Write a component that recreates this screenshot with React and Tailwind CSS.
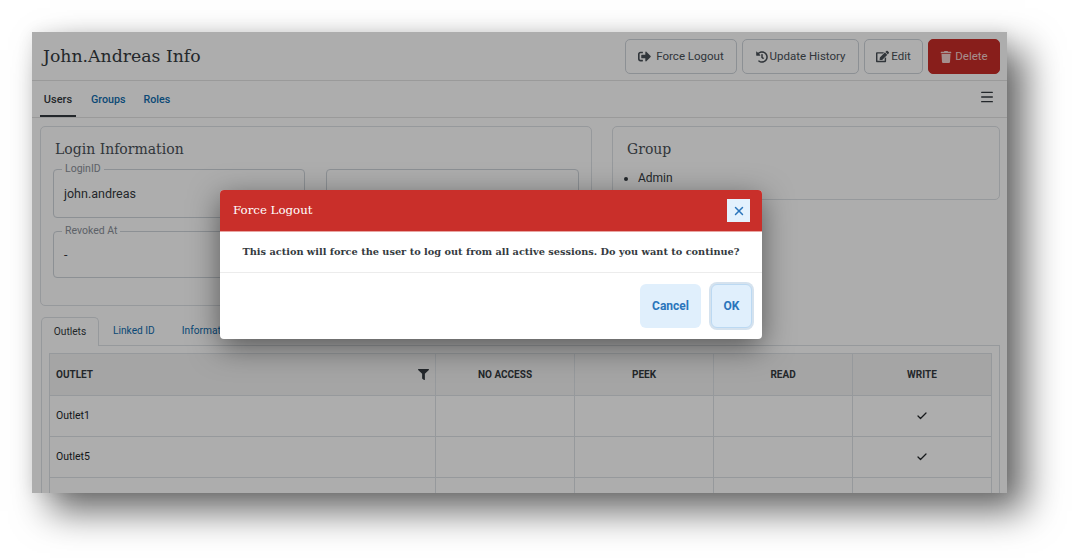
import React from "react";
import { FaSignOutAlt, FaHistory, FaEdit, FaTrash, FaFilter } from "react-icons/fa";
import { Menu, X, Check } from "lucide-react";

const slab = "font-['DejaVu_Serif',serif]";

function ActionButton({ icon, label, className = "" }) {
  return (
    <button className={`flex h-[35px] items-center justify-center rounded-[5px] border pt-[1px] text-[11.5px] ${className}`}>
      {icon}
      {label}
    </button>
  );
}

function Field({ label, value, className = "" }) {
  return (
    <div className={`relative flex items-center rounded-[4px] border border-[#ced4da] pl-[10px] pt-[1px] text-[12.5px] text-[#343a40] ${className}`}>
      {label && (
        <span className="absolute left-[8px] top-[-7px] bg-white px-[3px] text-[10.5px] leading-[12px] text-[#8a9099]">{label}</span>
      )}
      {value}
    </div>
  );
}

function Row({ name }) {
  return (
    <div className="grid h-[41px] grid-cols-[386px_139px_139px_139px_138px] border-b border-[#dee2e6] text-[10.5px] text-[#212529]">
      <div className="flex items-center border-r border-[#dee2e6] pl-[6px]">{name}</div>
      <div className="border-r border-[#dee2e6]" />
      <div className="border-r border-[#dee2e6]" />
      <div className="border-r border-[#dee2e6]" />
      <div className="flex items-center justify-center pb-[1px]">
        {name && <Check size={12} strokeWidth={2.5} />}
      </div>
    </div>
  );
}

export default function App() {
  return (
    <div className="h-[558px] w-[1072px] overflow-hidden bg-white pl-[32px] pt-[32px] font-['Roboto',sans-serif]">
      <div className="relative h-[461px] w-[975px] overflow-hidden bg-white shadow-[18px_18px_35px_rgba(0,0,0,0.6),0_0_15px_rgba(0,0,0,0.08)]">
        <header className="flex h-[49px] items-center justify-between border-b border-[#e3e3e3] pl-[11px] pr-[7px]">
          <h1 className={`${slab} pt-[2px] text-[17.3px] text-[#343a40]`}>John.Andreas Info</h1>
          <div className="flex gap-[5px]">
            <ActionButton className="w-[112px] gap-[5px] border-[#ced4da] text-[#495057]" icon={<FaSignOutAlt size={13} />} label="Force Logout" />
            <ActionButton className="w-[117px] gap-[2px] border-[#ced4da] text-[#495057]" icon={<FaHistory size={12} />} label="Update History" />
            <ActionButton className="w-[59px] gap-[2px] border-[#ced4da] text-[#495057]" icon={<FaEdit size={13} />} label="Edit" />
            <ActionButton className="w-[72px] gap-[3px] border-[#c92d28] bg-[#c92d28] text-[#f4d3d1]" icon={<FaTrash size={12} />} label="Delete" />
          </div>
        </header>

        <nav className="flex h-[37px] items-stretch justify-between border-b border-[#e3e3e3] pl-[8px] pr-[12px] text-[10.7px] font-medium">
          <div className="flex">
            <span className="flex w-[36px] items-center justify-center border-b-2 border-[#343a40] pt-[5px] text-[11px] text-[#343a40]">Users</span>
            <span className="ml-[15px] flex items-center pt-[2px] text-[#0f6cae]">Groups</span>
            <span className="ml-[18px] flex items-center pt-[2px] text-[#0f6cae]">Roles</span>
          </div>
          <div className="flex items-center pb-[4px] text-[#343a40]"><Menu size={16} /></div>
        </nav>

        <div className="flex items-start pl-[8px] pr-[7px] pt-[8px]">
          <section className="h-[180px] w-[552px] rounded-[5px] border border-[#dee2e6] pl-[12px] pr-[12px] pt-[12px]">
            <h2 className={`${slab} pl-[2px] text-[14px] leading-[20px] text-[#495057]`}>Login Information</h2>
            <div className="mt-[10px] grid grid-cols-[252px_253px] grid-rows-[49px_47px] gap-x-[21px] gap-y-[13px]">
              <Field label="LoginID" value="john.andreas" />
              <Field label="" value="" />
              <Field label="Revoked At" value="-" />
            </div>
          </section>
          <section className="ml-[20px] h-[74px] w-[389px] rounded-[5px] border border-[#dee2e6] pl-[14px] pt-[12px]">
            <h2 className={`${slab} text-[14px] leading-[20px] text-[#495057]`}>Group</h2>
            <ul className="mt-[11px] list-disc pl-[11px] text-[12px] leading-[16px] text-[#343a40]">
              <li>Admin</li>
            </ul>
          </section>
        </div>

        <div className="mt-[11px] flex pl-[9px] text-[10.2px]">
          <span className="relative -mb-px flex h-[29px] w-[58px] items-center justify-center rounded-t-[5px] border-x border-t border-[#dee2e6] bg-white text-[#343a40]">Outlets</span>
          <span className="ml-[14px] flex items-center text-[#0f6cae]">Linked ID</span>
          <span className="ml-[27px] flex items-center text-[#0f6cae]">Information</span>
        </div>
        <div className="ml-[9px] mr-[7px] h-[200px] border border-[#dee2e6] px-[7px] pt-[7px]">
          <div className="border-x border-t border-[#dee2e6]">
            <div className="grid h-[42px] grid-cols-[386px_139px_139px_139px_138px] border-b border-[#dee2e6] bg-[#f3f3f3] text-[10px] font-bold text-[#343a40]">
              <div className="flex items-center justify-between border-r border-[#dee2e6] pl-[6px] pr-[6px]">OUTLET<FaFilter size={11} /></div>
              <div className="flex items-center justify-center border-r border-[#dee2e6]">NO ACCESS</div>
              <div className="flex items-center justify-center border-r border-[#dee2e6]">PEEK</div>
              <div className="flex items-center justify-center border-r border-[#dee2e6]">READ</div>
              <div className="flex items-center justify-center">WRITE</div>
            </div>
            <Row name="Outlet1" />
            <Row name="Outlet5" />
            <Row name="" />
          </div>
        </div>

        <div className="absolute inset-0 z-20 bg-black/[0.32]" />
      </div>

      <div className="absolute left-[220px] top-[190px] z-30 w-[542px] overflow-hidden rounded-[4px] bg-white shadow-[0_8px_30px_rgba(0,0,0,0.5)]">
        <div className="flex h-[42px] items-center justify-between border-b border-[#e8a5a2] bg-[#c92f2a] pl-[13px] pr-[12px]">
          <span className={`${slab} pt-[1px] text-[11.8px] text-white`}>Force Logout</span>
          <span className="flex h-[23px] w-[23px] items-center justify-center bg-[#e3f1fd] text-[#2a75bb]"><X size={14} strokeWidth={2.5} /></span>
        </div>
        <div className={`${slab} flex h-[41px] items-center justify-center whitespace-nowrap border-b border-[#ececec] text-[9.75px] font-bold text-[#343a40]`}>
          This action will force the user to log out from all active sessions. Do you want to continue?
        </div>
        <div className="flex h-[66px] items-center justify-end gap-[10px] pr-[10px] text-[12px] font-bold text-[#2a75bb]">
          <button className="flex h-[44px] w-[61px] items-center justify-center rounded-[6px] bg-[#e0effc]">Cancel</button>
          <button className="flex h-[44px] w-[41px] items-center justify-center rounded-[6px] border border-[#bcd9f2] bg-[#e0effc] shadow-[0_0_0_2px_#d5e2ee]">OK</button>
        </div>
      </div>
    </div>
  );
}
